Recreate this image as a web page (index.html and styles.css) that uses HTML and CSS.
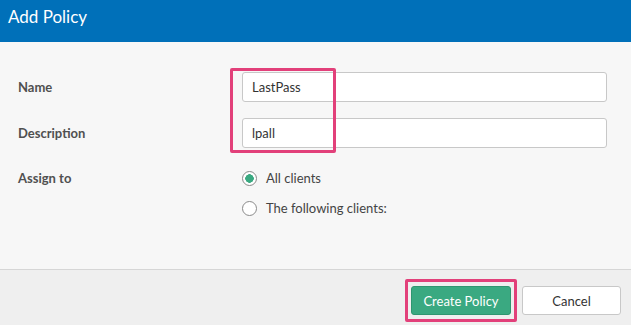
FILE: index.html
```html
<!DOCTYPE html>
<html lang="en">
<head>
    <meta charset="UTF-8">
    <title>Add Policy</title>
    <link rel="stylesheet" href="styles.css">
</head>
<body>
    <div class="modal">
        <div class="modal-header">
            <h1>Add Policy</h1>
        </div>

        <form class="modal-body">
            <div class="form-row">
                <label for="name">Name</label>
                <input type="text" id="name" value="LastPass">
            </div>
            <div class="form-row">
                <label for="description">Description</label>
                <input type="text" id="description" value="lpall">
            </div>
            <div class="form-row assign">
                <label>Assign to</label>
                <div class="radio-list">
                    <div class="radio checked"><span class="dot"></span>All clients</div>
                    <div class="radio"><span class="dot"></span>The following clients:</div>
                </div>
            </div>

            <!-- highlight annotation -->
            <div class="highlight fields-mark"></div>
        </form>

        <div class="modal-footer">
            <div class="btn-wrap">
                <button type="button" class="btn primary">Create Policy</button>
            </div>
            <button type="button" class="btn">Cancel</button>
        </div>
    </div>
</body>
</html>
```

FILE: styles.css
```css
body {
    margin: 0;
    font-family: Lato, "Open Sans", sans-serif;
    background: #f7f7f7;
    color: #444;
}

.modal {
    width: 631px;
    height: 325px;
    display: flex;
    flex-direction: column;
}

.modal-header {
    background: #0070b9;
    height: 42px;
    padding: 0 8px;
    display: flex;
    align-items: center;
}

.modal-header h1 {
    margin: 0 0 10px;
    font-size: 17px;
    font-weight: 400;
    color: #fff;
}

.modal-body {
    position: relative;
    flex: 1;
    padding: 30px 24px 0 18px;
    background: #f7f7f7;
}

.form-row {
    display: grid;
    grid-template-columns: 224px 1fr;
    align-items: center;
    margin-bottom: 16px;
}

.form-row label {
    font-size: 13px;
    font-weight: 700;
    color: #505050;
}

.form-row input {
    height: 30px;
    box-sizing: border-box;
    border: 1px solid #c8c8c8;
    border-radius: 3px;
    padding: 0 9px;
    font-family: inherit;
    font-size: 13px;
    color: #333;
    background: #fff;
}

.form-row.assign {
    align-items: start;
    margin-top: 22px;
}

.form-row.assign label {
    line-height: 16px;
}

.radio-list {
    display: flex;
    flex-direction: column;
    gap: 14px;
}

.radio {
    display: flex;
    align-items: center;
    gap: 9px;
    font-size: 13px;
    color: #444;
    line-height: 16px;
}

.radio .dot {
    width: 15px;
    height: 15px;
    box-sizing: border-box;
    border: 1px solid #8a8a8a;
    border-radius: 50%;
    background: #fff;
}

.radio.checked .dot {
    background: radial-gradient(circle, #3aa981 0 4px, #fff 4.5px);
}

.highlight {
    position: absolute;
    border: 3px solid #e2407a;
    border-radius: 2px;
}

.fields-mark {
    left: 230px;
    top: 26px;
    width: 100px;
    height: 79px;
}

.modal-footer {
    height: 56px;
    border-top: 1px solid #d6d6d6;
    background: #efefef;
    display: flex;
    justify-content: flex-end;
    align-items: flex-start;
    padding: 16px 10px 0 0;
    box-sizing: border-box;
    gap: 5px;
}

.btn-wrap {
    margin-top: -7px;
    border: 3px solid #e2407a;
    border-radius: 2px;
    padding: 4px 3px;
}

.btn {
    height: 29px;
    width: 99px;
    border: 1px solid #c8c8c8;
    border-radius: 3px;
    background: #fff;
    font-family: inherit;
    font-size: 13px;
    color: #333;
    cursor: pointer;
}

.btn.primary {
    width: 100px;
    background: #3aa981;
    border-color: #2f9670;
    color: #fff;
}
```
